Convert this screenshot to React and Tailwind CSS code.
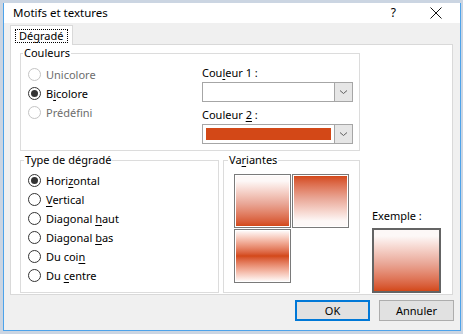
import React from "react";

const font = { fontFamily: '"Noto Sans", "Liberation Sans", sans-serif' };

const Radio = ({ checked, disabled, children }) => (
    <div className="flex items-center h-[19px]">
        <span
            className={`w-[13px] h-[13px] rounded-full border flex items-center justify-center bg-white ${
                disabled ? "border-[#c4c4c4]" : "border-[#333333]"
            }`}
        >
            {checked && <span className="w-[7px] h-[7px] rounded-full bg-[#333333]" />}
        </span>
        <span className={`ml-[5px] ${disabled ? "text-[#6d6d6d]" : "text-black"}`}>{children}</span>
    </div>
);

const U = ({ children }) => <span className="underline underline-offset-[2px]">{children}</span>;

const Combo = ({ color }) => (
    <div className="flex w-[151px] h-[20px] border border-[#a6a6a6] bg-white">
        <div className="flex-1 p-[3px]">
            {color && <div className="w-full h-full" style={{ background: color }} />}
        </div>
        <div className="w-[18px] h-full border-l border-[#a6a6a6] bg-[#e6e6e6] flex items-center justify-center">
            <svg width="9" height="6" viewBox="0 0 9 6">
                <path d="M1 1.5 L4.5 4.5 L8 1.5" fill="none" stroke="#606060" strokeWidth="1" />
            </svg>
        </div>
    </div>
);

const Group = ({ label, className, legendClass = "ml-[2px]", children }) => (
    <fieldset className={`border border-[#dcdcdc] ${className}`}>
        <legend className={`${legendClass} px-[1px] leading-[16px]`}>{label}</legend>
        {children}
    </fieldset>
);

const Swatch = ({ gradient }) => (
    <div className="w-[57px] h-[54px] border border-[#7a7a7a] bg-white p-[1px]">
        <div className={`w-full h-full ${gradient}`} />
    </div>
);

const App = () => {
    return (
        <div className="w-[463px] h-[334px] bg-[#cbd5e2] pl-[3px] pt-[3px] text-[11px] leading-[16px] text-black" style={font}>
            <div className="w-[458px] h-[328px] border-x border-b border-[#4da3ea] bg-[#f0f0f0] flex flex-col">
                <div className="h-[20px] bg-white flex items-center pl-[9px]">
                    <span className="text-[11.5px]">Motifs et textures</span>
                    <span className="ml-auto mr-[34px] text-[12px]">?</span>
                    <svg className="mr-[18px]" width="12" height="12" viewBox="0 0 12 12">
                        <path d="M0.5 0.5 L11.5 11.5 M11.5 0.5 L0.5 11.5" stroke="#111" strokeWidth="1" />
                    </svg>
                </div>
                <div className="flex-1 pl-[6px] pt-[2px]">
                    <div className="relative z-10 -mb-px w-[63px] h-[20px] bg-white border-x border-t border-[#d9d9d9] pt-[3px] pl-[4px]">
                        <div className="w-[53px] h-[14px] border border-dotted border-black flex items-center pl-[3px]">
                            Dégradé
                        </div>
                    </div>
                    <div className="w-[443px] h-[251px] bg-white border border-[#d9d9d9] pl-[9px]">
                        <Group label="Couleurs" className="w-[340px] h-[106px]">
                            <div className="flex pt-[4px] pl-[7px]">
                                <div className="w-[174px]">
                                    <Radio disabled>Unicolore</Radio>
                                    <Radio checked>
                                        B<U>i</U>colore
                                    </Radio>
                                    <Radio disabled>Prédéfini</Radio>
                                </div>
                                <div>
                                    <div className="h-[16px]">
                                        Cou<U>l</U>eur 1 :
                                    </div>
                                    <div className="mt-[1px]">
                                        <Combo />
                                    </div>
                                    <div className="h-[16px] mt-[5px]">
                                        Couleur <U>2</U> :
                                    </div>
                                    <div className="mt-[1px]">
                                        <Combo color="#d34817" />
                                    </div>
                                </div>
                            </div>
                        </Group>
                        <div className="flex mt-[1px]">
                            <Group label="Type de dégradé" legendClass="ml-[3px]" className="w-[199px] h-[141px]">
                                <div className="pt-[3px] pl-[7px]">
                                    <Radio checked>
                                        Hori<U>z</U>ontal
                                    </Radio>
                                    <Radio>
                                        <U>V</U>ertical
                                    </Radio>
                                    <Radio>
                                        Diagonal <U>h</U>aut
                                    </Radio>
                                    <Radio>
                                        Diagonal <U>b</U>as
                                    </Radio>
                                    <Radio>
                                        Du coi<U>n</U>
                                    </Radio>
                                    <Radio>
                                        Du <U>c</U>entre
                                    </Radio>
                                </div>
                            </Group>
                            <Group label={<>Va<U>r</U>iantes</>} legendClass="ml-[4px]" className="ml-[4px] w-[137px] h-[141px]">
                                <div className="grid grid-cols-[57px_57px] gap-[1px] pt-[6px] pl-[10px]">
                                    <Swatch gradient="bg-linear-to-b from-[#fdf8f7] from-10% via-[#e9a797] via-55% to-[#d34817]" />
                                    <Swatch gradient="bg-linear-to-b from-[#d34817] via-[#e9a797] via-45% to-[#fdf8f7] to-90%" />
                                    <Swatch gradient="bg-linear-to-b from-[#fdf8f7] via-[#d34817] to-[#fdf8f7]" />
                                </div>
                            </Group>
                            <div className="ml-[12px] pt-[56px]">
                                <div className="h-[16px]">Exemple :</div>
                                <div className="mt-[4px] w-[69px] h-[65px] border-2 border-[#646464] bg-linear-to-b from-[#fdf8f7] from-10% via-[#e9a797] via-55% to-[#d34817]" />
                            </div>
                        </div>
                    </div>
                    <div className="flex justify-end pr-[6px] mt-[5px] gap-[9px]">
                        <button className="w-[75px] h-[21px] border-2 border-[#0078d7] bg-[#e1e1e1] flex items-center justify-center">
                            OK
                        </button>
                        <button className="w-[75px] h-[21px] border border-[#adadad] bg-[#e1e1e1] flex items-center justify-center">
                            Annuler
                        </button>
                    </div>
                </div>
            </div>
        </div>
    );
};

export default App;
